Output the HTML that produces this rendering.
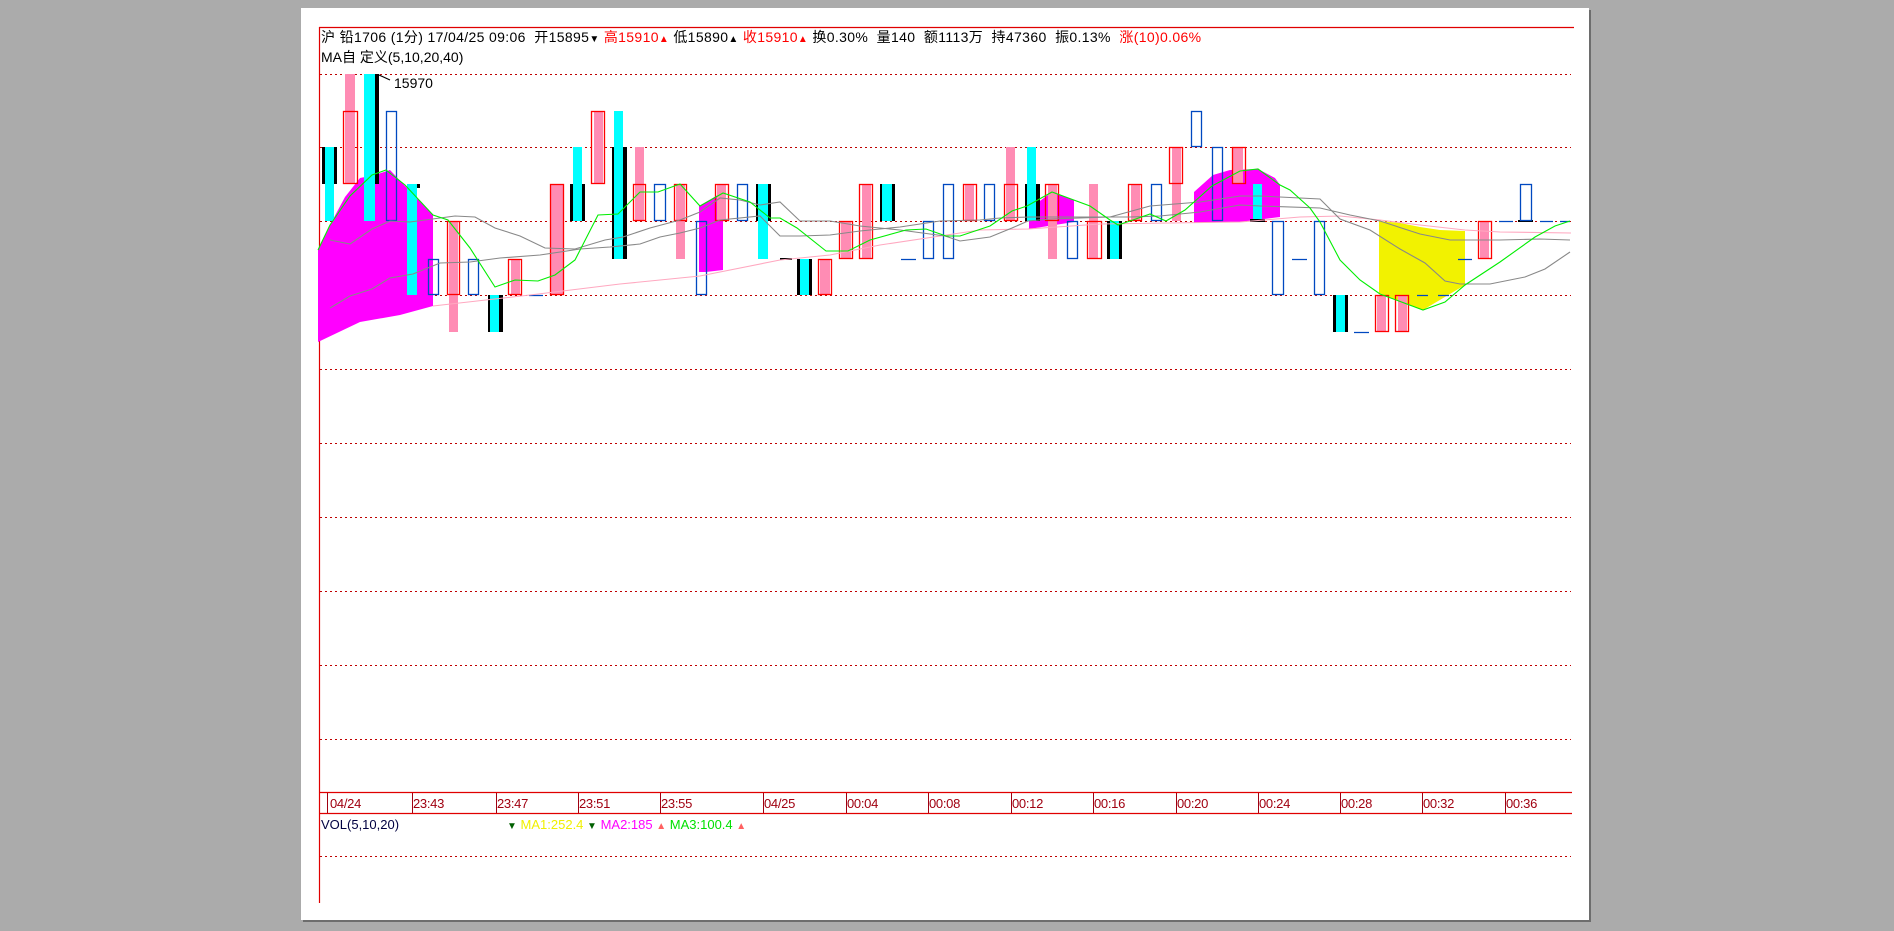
<!DOCTYPE html>
<html><head><meta charset="utf-8"><style>
html,body{margin:0;padding:0;width:1894px;height:931px;background:#ababab;overflow:hidden;font-family:"Liberation Sans","Noto Sans CJK SC",sans-serif}
#panel{position:absolute;left:301px;top:8px;width:1288px;height:912px;background:#fff;box-shadow:2px 2px 0 #6d6d6d}
.t{position:absolute;font-size:14px;white-space:nowrap;color:#000;line-height:16px}
.r{color:#f00}
.lab{position:absolute;top:797px;font-size:13px;color:#a00010;line-height:14px;letter-spacing:-0.3px}
</style></head><body>
<div id="panel"></div>
<svg width="1894" height="931" style="position:absolute;left:0;top:0">
<g stroke="#c00000" stroke-dasharray="2 3" stroke-width="1">
<line x1="320" y1="74.5" x2="1571" y2="74.5"/><line x1="320" y1="147.5" x2="1571" y2="147.5"/><line x1="320" y1="221.5" x2="1571" y2="221.5"/><line x1="320" y1="295.5" x2="1571" y2="295.5"/><line x1="320" y1="369.5" x2="1571" y2="369.5"/><line x1="320" y1="443.5" x2="1571" y2="443.5"/><line x1="320" y1="517.5" x2="1571" y2="517.5"/><line x1="320" y1="591.5" x2="1571" y2="591.5"/><line x1="320" y1="665.5" x2="1571" y2="665.5"/><line x1="320" y1="739.5" x2="1571" y2="739.5"/><line x1="320" y1="856.5" x2="1571" y2="856.5"/>
</g>
<g stroke="#e00000" stroke-width="1.2">
<line x1="319" y1="27.5" x2="1574" y2="27.5"/><line x1="319.5" y1="27" x2="319.5" y2="903"/>
<line x1="319" y1="792.5" x2="1572" y2="792.5"/><line x1="319" y1="813.5" x2="1572" y2="813.5"/>
</g>
<g stroke="#a00010" stroke-width="1">
<line x1="327.5" y1="793" x2="327.5" y2="813"/><line x1="412.5" y1="793" x2="412.5" y2="813"/><line x1="496.5" y1="793" x2="496.5" y2="813"/><line x1="578.5" y1="793" x2="578.5" y2="813"/><line x1="660.5" y1="793" x2="660.5" y2="813"/><line x1="763.5" y1="793" x2="763.5" y2="813"/><line x1="846.5" y1="793" x2="846.5" y2="813"/><line x1="928.5" y1="793" x2="928.5" y2="813"/><line x1="1011.5" y1="793" x2="1011.5" y2="813"/><line x1="1093.5" y1="793" x2="1093.5" y2="813"/><line x1="1176.5" y1="793" x2="1176.5" y2="813"/><line x1="1258.5" y1="793" x2="1258.5" y2="813"/><line x1="1340.5" y1="793" x2="1340.5" y2="813"/><line x1="1422.5" y1="793" x2="1422.5" y2="813"/><line x1="1505.5" y1="793" x2="1505.5" y2="813"/>
</g>
<g fill="#ff00ff">
<polygon points="318,250 330,225 345,197 360,178 375,175 390,170 405,186 433,215 433,306 400,315 360,322 318,342"/>
<polygon points="699,206 723,192 723,270 706,272 699,272"/>
<polygon points="1029,209 1052,192 1074,200 1074,222 1029,229"/>
<polygon points="1194,192 1213,175 1230,170 1258,169 1275,178 1280,185 1280,217 1240,222 1194,223"/>
</g>
<polygon fill="#f2f200" points="1379,221 1400,223 1420,227 1440,230 1465,231 1465,285 1423,310 1379,293"/>
<g>
<rect x="322" y="147" width="15" height="37" fill="#000"/><rect x="325" y="147" width="9" height="74" fill="#0ff"/>
<rect x="345" y="74" width="10" height="110" fill="#ff8cb4"/>
<rect x="364" y="74" width="11" height="147" fill="#0ff"/><rect x="375" y="74" width="4" height="110" fill="#000"/>
<rect x="407" y="184" width="10" height="111" fill="#0ff"/><rect x="417" y="184" width="3" height="4" fill="#000"/>
<rect x="449" y="221" width="9" height="111" fill="#ff8cb4"/>
<rect x="488" y="295" width="15" height="37" fill="#000"/><rect x="490" y="295" width="9" height="37" fill="#0ff"/>
<rect x="511" y="259" width="9" height="36" fill="#ff8cb4"/>
<rect x="551" y="184" width="13" height="111" fill="#ff8cb4"/>
<rect x="570" y="184" width="15" height="37" fill="#000"/><rect x="573" y="147" width="9" height="74" fill="#0ff"/>
<rect x="594" y="111" width="9" height="73" fill="#ff8cb4"/>
<rect x="612" y="147" width="15" height="112" fill="#000"/><rect x="614" y="111" width="9" height="148" fill="#0ff"/>
<rect x="635" y="147" width="9" height="74" fill="#ff8cb4"/>
<rect x="676" y="184" width="9" height="75" fill="#ff8cb4"/>
<rect x="717" y="184" width="9" height="37" fill="#ff8cb4"/>
<rect x="756" y="184" width="15" height="37" fill="#000"/><rect x="758" y="184" width="10" height="75" fill="#0ff"/>
<rect x="780" y="258" width="12" height="2" fill="#000"/>
<rect x="797" y="259" width="15" height="36" fill="#000"/><rect x="800" y="259" width="9" height="36" fill="#0ff"/>
<rect x="820" y="259" width="10" height="36" fill="#ff8cb4"/>
<rect x="841" y="221" width="10" height="38" fill="#ff8cb4"/>
<rect x="862" y="184" width="9" height="75" fill="#ff8cb4"/>
<rect x="880" y="184" width="15" height="37" fill="#000"/><rect x="882" y="184" width="10" height="37" fill="#0ff"/>
<rect x="965" y="184" width="9" height="37" fill="#ff8cb4"/>
<rect x="1006" y="147" width="9" height="74" fill="#ff8cb4"/>
<rect x="1025" y="184" width="15" height="37" fill="#000"/><rect x="1027" y="147" width="9" height="74" fill="#0ff"/>
<rect x="1048" y="184" width="9" height="75" fill="#ff8cb4"/>
<rect x="1089" y="184" width="9" height="75" fill="#ff8cb4"/>
<rect x="1107" y="221" width="15" height="38" fill="#000"/><rect x="1110" y="221" width="9" height="38" fill="#0ff"/>
<rect x="1131" y="184" width="9" height="37" fill="#ff8cb4"/>
<rect x="1172" y="147" width="9" height="74" fill="#ff8cb4"/>
<rect x="1233" y="147" width="10" height="37" fill="#ff8cb4"/>
<rect x="1253" y="184" width="9" height="37" fill="#0ff"/><rect x="1250" y="219" width="15" height="3" fill="#000"/>
<rect x="1333" y="295" width="15" height="37" fill="#000"/><rect x="1336" y="295" width="9" height="37" fill="#0ff"/>
<rect x="1377" y="295" width="9" height="37" fill="#ff8cb4"/>
<rect x="1398" y="295" width="9" height="37" fill="#ff8cb4"/>
<rect x="1480" y="221" width="9" height="38" fill="#ff8cb4"/>
<rect x="1518" y="220" width="15" height="2" fill="#000"/>
</g>
<g fill="none" stroke="#f00" stroke-width="1.3">
<rect x="343.5" y="111.5" width="14" height="72"/><rect x="447.5" y="221.5" width="12" height="73"/><rect x="508.5" y="259.5" width="13" height="35"/><rect x="550.5" y="184.5" width="13" height="110"/><rect x="591.5" y="111.5" width="13" height="72"/><rect x="633.5" y="184.5" width="12" height="36"/><rect x="674.5" y="184.5" width="12" height="36"/><rect x="715.5" y="184.5" width="13" height="36"/><rect x="818.5" y="259.5" width="13" height="35"/><rect x="839.5" y="221.5" width="13" height="37"/><rect x="859.5" y="184.5" width="13" height="74"/><rect x="963.5" y="184.5" width="13" height="36"/><rect x="1004.5" y="184.5" width="13" height="36"/><rect x="1045.5" y="184.5" width="13" height="36"/><rect x="1087.5" y="221.5" width="14" height="37"/><rect x="1128.5" y="184.5" width="13" height="36"/><rect x="1169.5" y="147.5" width="13" height="36"/><rect x="1232.5" y="147.5" width="13" height="36"/><rect x="1375.5" y="295.5" width="13" height="36"/><rect x="1395.5" y="295.5" width="13" height="36"/><rect x="1478.5" y="221.5" width="13" height="37"/>
</g>
<g fill="none" stroke="#0048c0" stroke-width="1.3">
<rect x="386.5" y="111.5" width="10" height="109"/><rect x="428.5" y="259.5" width="10" height="35"/><rect x="468.5" y="259.5" width="10" height="35"/><rect x="654.5" y="184.5" width="11" height="36"/><rect x="696.5" y="221.5" width="10" height="73"/><rect x="737.5" y="184.5" width="10" height="36"/><rect x="923.5" y="221.5" width="10" height="37"/><rect x="943.5" y="184.5" width="10" height="74"/><rect x="984.5" y="184.5" width="10" height="36"/><rect x="1067.5" y="221.5" width="10" height="37"/><rect x="1151.5" y="184.5" width="10" height="36"/><rect x="1191.5" y="111.5" width="10" height="35"/><rect x="1212.5" y="147.5" width="10" height="73"/><rect x="1272.5" y="221.5" width="11" height="73"/><rect x="1314.5" y="221.5" width="10" height="73"/><rect x="1520.5" y="184.5" width="11" height="36"/>
<path d="M529 295.5H543M901 259.5H916M1292 259.5H1307M1354 332.5H1369M1417 295.5H1428M1438 295.5H1449M1458 259.5H1472M1499 221.5H1513M1540 221.5H1553M1560 221.5H1570"/>
</g>
<g fill="none" stroke-width="1.1">
<polyline stroke="#ffa8c0" points="433,306 530,295 620,284 700,276 780,260 830,255 880,245 980,230 1028,229 1100,224 1240,222 1300,217 1340,216 1380,220 1420,225 1465,230 1500,232 1571,233"/>
<polyline stroke="#888" points="330,240 350,244 372,229 390,221 410,222 440,218 455,216 475,217 495,228 520,236 545,248 575,249 605,240 623,237 650,228 680,220 700,212 720,198 740,200 760,205 780,202 800,221 830,221 860,226 900,230 945,236 960,241 990,237 1012,228 1028,221 1050,219 1080,218 1110,217 1150,206 1200,202 1240,196 1260,196 1320,199 1340,219 1370,230 1400,249 1425,263 1445,281 1460,284 1490,284 1525,277 1545,269 1570,252"/>
<polyline stroke="#888" points="330,308 350,296 372,289 390,278 413,274 440,263 470,262 500,258 540,255 580,249 610,247 640,244 660,237 680,233 700,228 720,220 760,216 780,236 800,236 830,235 860,231 900,227 940,221 980,220 1000,218 1030,217 1080,217 1130,217 1160,216 1200,212 1240,205 1260,206 1320,208 1350,215 1380,221 1420,234 1450,240 1500,240 1540,239 1570,240"/>
<polyline stroke="#00ee00" points="318,250 330,225 350,196 372,175 386,170 405,185 433,215 448,220 470,248 495,287 515,280 538,281 555,275 575,260 598,215 618,214 640,192 658,192 680,184 700,206 723,193 750,202 770,218 780,218 797,228 826,251 848,251 870,240 906,230 926,229 946,236 960,236 990,226 1012,211 1027,206 1052,192 1090,206 1110,220 1118,225 1130,221 1150,214 1166,221 1185,210 1212,186 1240,171 1258,169 1280,185 1290,190 1310,208 1320,222 1340,260 1360,280 1380,294 1423,310 1445,302 1465,285 1500,262 1535,237 1555,226 1570,221"/>
<polyline stroke="#000" points="379,75 390,80"/>
</g>
</svg>
<div class="t" style="left:394px;top:75px">15970</div>
<div class="t" style="left:321px;top:29px;letter-spacing:0.35px">沪 铅1706 (1分) 17/04/25 09:06&nbsp; 开15895<span style="font-size:10px">▼</span> <span class="r">高15910<span style="font-size:10px">▲</span></span> 低15890<span style="font-size:10px">▲</span> <span class="r">收15910<span style="font-size:10px">▲</span></span> 换0.30%&nbsp; 量140&nbsp; 额1113万&nbsp; 持47360&nbsp; 振0.13%&nbsp; <span class="r">涨(10)0.06%</span></div>
<div class="t" style="left:321px;top:49px">MA自 定义(5,10,20,40)</div>
<div class="lab" style="left:330px">04/24</div><div class="lab" style="left:413px">23:43</div><div class="lab" style="left:497px">23:47</div><div class="lab" style="left:579px">23:51</div><div class="lab" style="left:661px">23:55</div><div class="lab" style="left:764px">04/25</div><div class="lab" style="left:847px">00:04</div><div class="lab" style="left:929px">00:08</div><div class="lab" style="left:1012px">00:12</div><div class="lab" style="left:1094px">00:16</div><div class="lab" style="left:1177px">00:20</div><div class="lab" style="left:1259px">00:24</div><div class="lab" style="left:1341px">00:28</div><div class="lab" style="left:1423px">00:32</div><div class="lab" style="left:1506px">00:36</div>
<div class="t" style="left:321px;top:817px;font-size:13px;color:#000040">VOL(5,10,20)</div>
<div class="t" style="left:507px;top:817px;font-size:13px"><span style="color:#006000;font-size:10px">▼</span> <span style="color:#f0f000">MA1:252.4</span> <span style="color:#006000;font-size:10px">▼</span> <span style="color:#ff00ff">MA2:185</span> <span style="color:#ff6060;font-size:10px">▲</span> <span style="color:#00e000">MA3:100.4</span> <span style="color:#ff6060;font-size:10px">▲</span></div>
</body></html>
